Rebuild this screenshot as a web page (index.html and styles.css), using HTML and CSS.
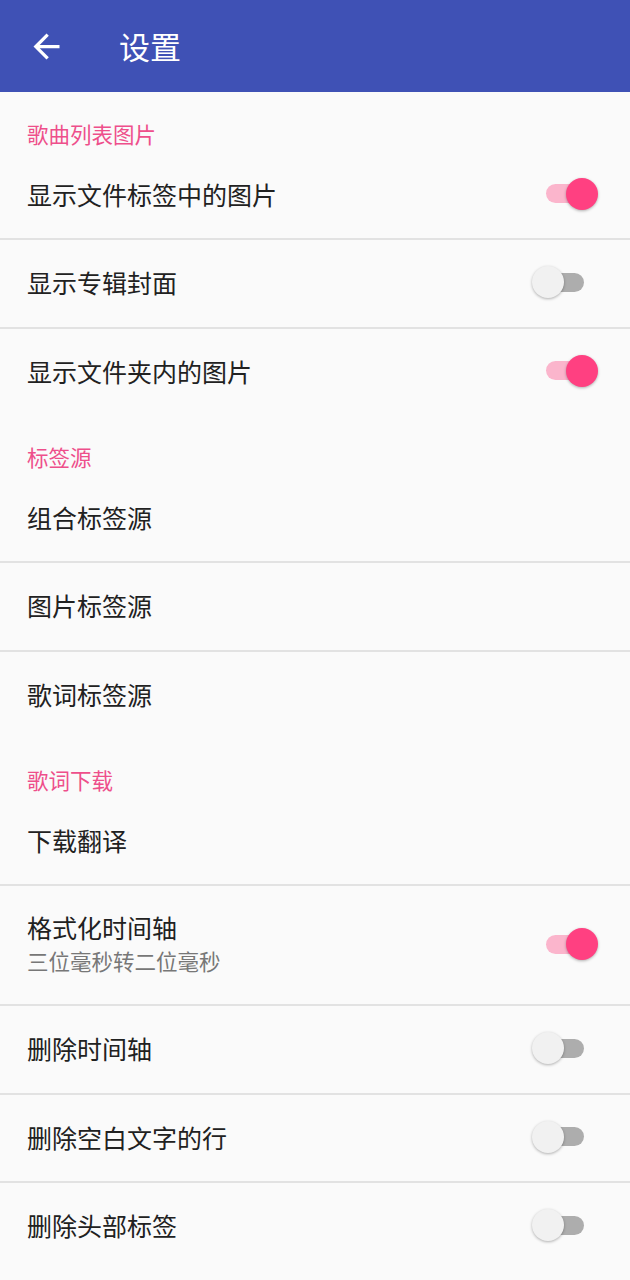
FILE: index.html
```html
<!DOCTYPE html>
<html lang="zh-CN">
<head>
    <meta charset="UTF-8">
    <meta name="viewport" content="width=device-width, initial-scale=1.0">
    <title>设置</title>
    <link rel="stylesheet" href="styles.css">
</head>
<body>

    <header class="toolbar">
        <svg class="back-icon" viewBox="0 0 24 24" width="39" height="39">
            <path fill="#fff" d="M20 11H7.83l5.59-5.59L12 4l-8 8 8 8 1.41-1.41L7.83 13H20v-2z"/>
        </svg>
        <h1 class="toolbar-title">设置</h1>
    </header>

    <div class="section-title">歌曲列表图片</div>
    <div class="pref divider">
        <span class="pref-title">显示文件标签中的图片</span>
        <div class="switch on"><span class="track"></span><span class="thumb"></span></div>
    </div>
    <div class="pref divider">
        <span class="pref-title">显示专辑封面</span>
        <div class="switch off"><span class="track"></span><span class="thumb"></span></div>
    </div>
    <div class="pref">
        <span class="pref-title">显示文件夹内的图片</span>
        <div class="switch on"><span class="track"></span><span class="thumb"></span></div>
    </div>

    <div class="section-title">标签源</div>
    <div class="pref divider">
        <span class="pref-title">组合标签源</span>
    </div>
    <div class="pref divider">
        <span class="pref-title">图片标签源</span>
    </div>
    <div class="pref">
        <span class="pref-title">歌词标签源</span>
    </div>

    <div class="section-title">歌词下载</div>
    <div class="pref divider">
        <span class="pref-title">下载翻译</span>
    </div>
    <div class="pref pref-tall divider">
        <div class="pref-text">
            <span class="pref-title">格式化时间轴</span>
            <span class="pref-summary">三位毫秒转二位毫秒</span>
        </div>
        <div class="switch on"><span class="track"></span><span class="thumb"></span></div>
    </div>
    <div class="pref divider">
        <span class="pref-title">删除时间轴</span>
        <div class="switch off"><span class="track"></span><span class="thumb"></span></div>
    </div>
    <div class="pref divider">
        <span class="pref-title">删除空白文字的行</span>
        <div class="switch off"><span class="track"></span><span class="thumb"></span></div>
    </div>
    <div class="pref">
        <span class="pref-title">删除头部标签</span>
        <div class="switch off"><span class="track"></span><span class="thumb"></span></div>
    </div>

</body>
</html>
```

FILE: styles.css
```css
body {
    margin: 0;
    background-color: #fafafa;
    font-family: "Noto Sans CJK SC", "Noto Sans", sans-serif;
}

.toolbar {
    height: 92px;
    background-color: #3f51b5;
    display: flex;
    align-items: center;
    padding-left: 27px;
}

.back-icon {
    display: block;
}

.toolbar-title {
    margin: 0 0 0 53px;
    font-size: 31px;
    font-weight: normal;
    color: #fff;
    line-height: 34px;
}

.section-title {
    box-sizing: border-box;
    height: 57.5px;
    padding: 30px 0 0 27px;
    font-size: 21.5px;
    line-height: 24px;
    color: #ee4f8b;
}

.pref {
    box-sizing: border-box;
    height: 88.5px;
    display: flex;
    align-items: center;
    justify-content: space-between;
    padding: 0 32px 0 27px;
}

.pref-tall {
    height: 120px;
}

/* line sits just under the row, over the top of the next one */
.divider {
    box-shadow: 0 2px 0 #e2e2e2;
}

.pref-title {
    font-size: 25px;
    line-height: 34px;
    color: #212121;
}

.pref-text {
    display: flex;
    flex-direction: column;
}

.pref-summary {
    font-size: 21.5px;
    line-height: 34px;
    color: #777;
}

.switch {
    position: relative;
    width: 54px;
    height: 32px;
    flex-shrink: 0;
}

.switch .track {
    position: absolute;
    left: 2px;
    right: 2px;
    top: 6.5px;
    height: 19px;
    border-radius: 10px;
}

.switch .thumb {
    position: absolute;
    top: 0;
    width: 32px;
    height: 32px;
    border-radius: 50%;
    box-shadow: 0 1px 3px rgba(0, 0, 0, 0.3);
}

.switch.on .track {
    background-color: #fbb5cc;
}

.switch.on .thumb {
    right: 0;
    background-color: #ff4081;
}

.switch.off {
    margin-right: 12px;
}

.switch.off .track {
    background-color: #adadad;
}

.switch.off .thumb {
    left: 0;
    background-color: #f1f1f1;
}
```
